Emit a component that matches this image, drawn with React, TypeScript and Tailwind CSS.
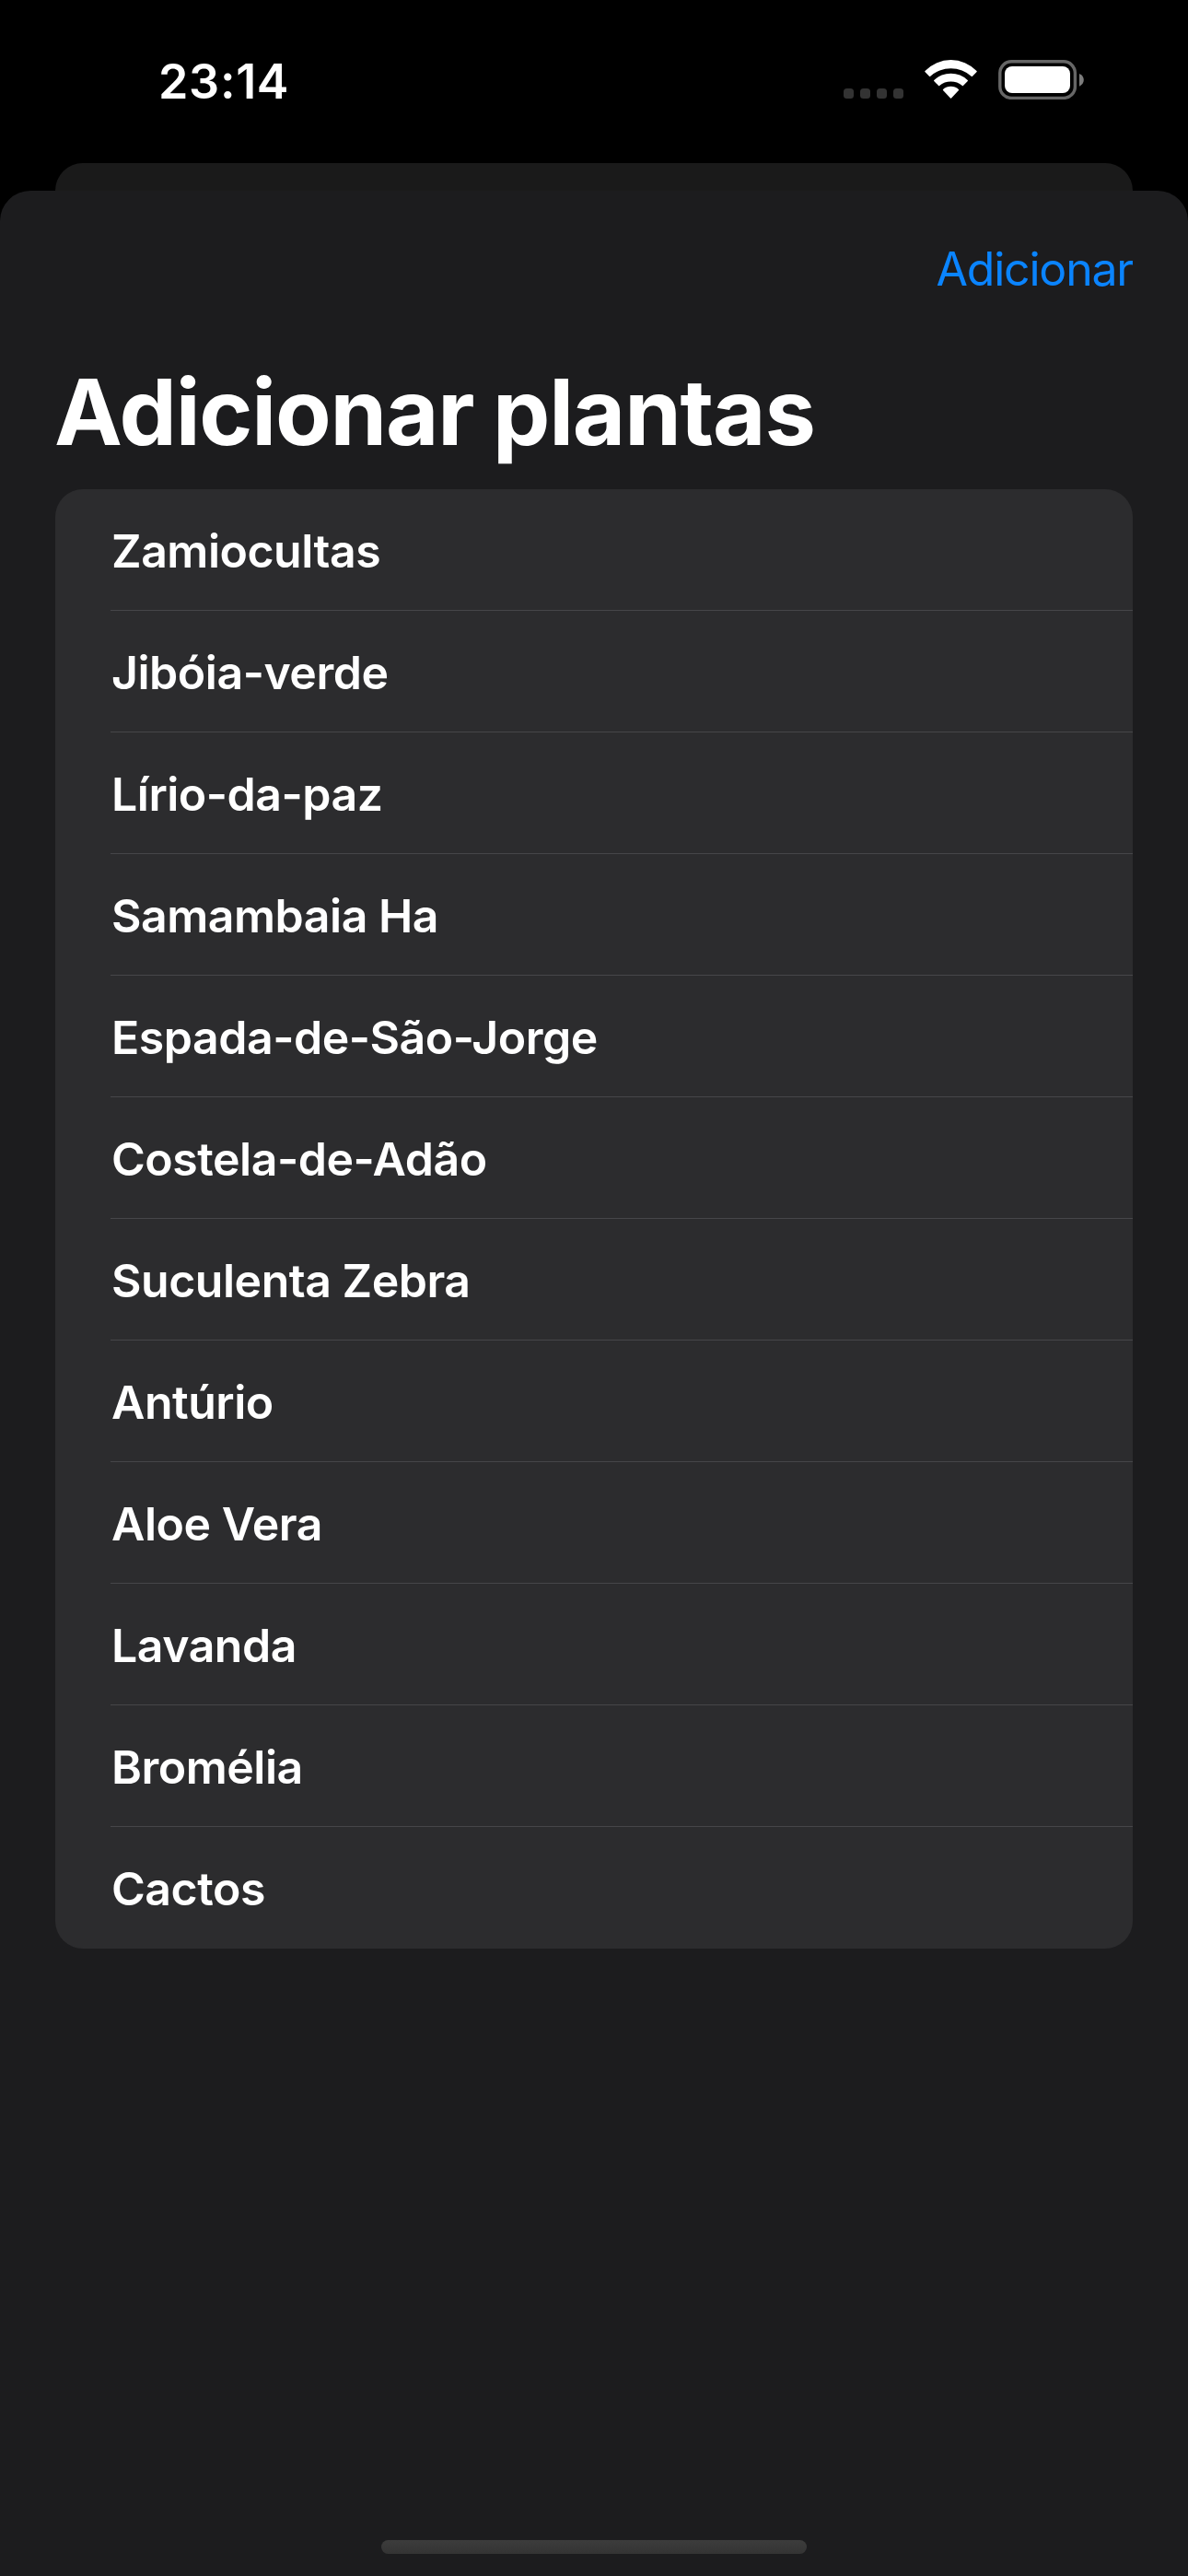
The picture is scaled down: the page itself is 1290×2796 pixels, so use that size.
const plants = [
  'Zamiocultas',
  'Jibóia-verde',
  'Lírio-da-paz',
  'Samambaia Ha',
  'Espada-de-São-Jorge',
  'Costela-de-Adão',
  'Suculenta Zebra',
  'Antúrio',
  'Aloe Vera',
  'Lavanda',
  'Bromélia',
  'Cactos',
];

function StatusBar() {
  return (
    <header className="flex h-[177px] shrink-0 items-start justify-between pr-[112px] pl-[172px]">
      <span className="mt-[55px] text-[52px] leading-[67px] font-semibold tracking-[0.7px]">23:14</span>
      <div className="mt-[65px] flex items-start">
        <div className="mt-[31px] mr-[23px] flex gap-[7px]">
          {[0, 1, 2, 3].map((i) => (
            <span key={i} className="size-[11px] rounded-[3.5px] bg-[#333333]" />
          ))}
        </div>
        <svg className="mr-[23px] h-[43px] w-[57px]" viewBox="0 0 57 43" fill="white">
          <path d="M.4 12.9Q0 12.4.5 12A38.7 38.7 0 0 1 56.5 12Q57 12.4 56.6 12.9L52 17.8Q51.5 18.3 51 17.9A33.5 33.5 0 0 0 6 17.9Q5.5 18.3 5 17.8Z" />
          <path d="M10.2 23Q9.8 22.6 10.3 22.1A26 26 0 0 1 46.7 22.1Q47.2 22.6 46.8 23L41.9 28Q41.4 28.5 40.9 28A19.4 19.4 0 0 0 16.1 28Q15.6 28.5 15.1 28Z" />
          <path d="M20 33Q19.6 32.5 20.1 32A12.5 12.5 0 0 1 36.9 32Q37.4 32.5 37 33L29 41.6Q28.5 42.1 28 41.6Z" />
        </svg>
        <svg className="h-[43px] w-[94px]" viewBox="0 0 94 43">
          <rect x="1.8" y="1.8" width="81.6" height="39.6" rx="12.5" fill="none" stroke="#666666" strokeWidth="3.4" />
          <rect x="7" y="7" width="71" height="29" rx="8" fill="white" />
          <path d="M88 15c6.4 2.6 6.4 11.1 0 13.7Z" fill="#7c7c7c" />
        </svg>
      </div>
    </header>
  );
}

export default function App() {
  return (
    <div className="flex h-[2796px] w-[1290px] flex-col bg-black font-['Inter',sans-serif] text-white">
      <StatusBar />
      <div className="mx-[60px] h-[30px] shrink-0 rounded-t-[30px] bg-[#1a1a1a]" />
      <main className="flex grow flex-col rounded-t-[33px] bg-[#1c1c1e] px-[60px]">
        <button className="mt-[52px] self-end text-[50px] leading-[66px] font-normal tracking-[-1.2px] text-[#0a84ff]">
          Adicionar
        </button>
        <h1 className="mt-[60px] -ml-px text-[99px] leading-[124px] font-bold tracking-[-1.2px] [word-spacing:-1.5px]">
          Adicionar plantas
        </h1>
        <ul className="mt-[22px] overflow-hidden rounded-[30px] bg-[#2c2c2e] pl-[60px]">
          {plants.map((plant) => (
            <li
              key={plant}
              className="flex h-[132px] items-center border-b border-[#464649] pt-[2px] pl-px text-[50px] leading-[74px] font-semibold tracking-[-0.48px] last:border-transparent"
            >
              {plant}
            </li>
          ))}
        </ul>
        <div className="mt-auto mb-[24px] h-[15px] w-[462px] self-center rounded-full bg-linear-to-b from-[#3c3c3c] to-[#343434]" />
      </main>
    </div>
  );
}
